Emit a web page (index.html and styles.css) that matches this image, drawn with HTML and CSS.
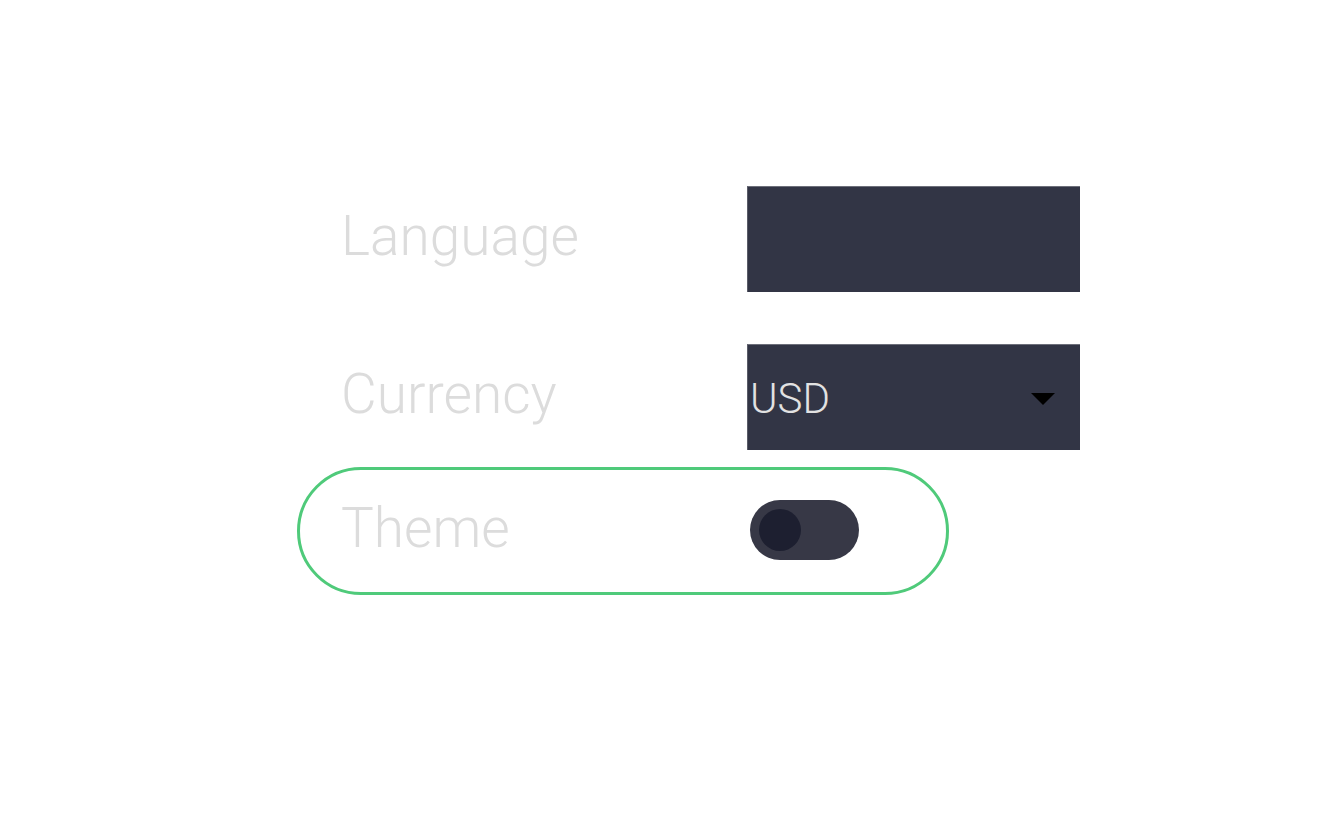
FILE: index.html
```html
<!DOCTYPE html>
<html lang="en">
<head>
<meta charset="utf-8">
<title>Settings</title>
<link rel="stylesheet" href="styles.css">
</head>
<body>
<div class="settings">
  <div class="row row-lang">
    <div class="label">Language</div>
    <div class="field"></div>
  </div>
  <div class="row row-cur">
    <div class="label">Currency</div>
    <div class="field select">
      <span class="value">USD</span>
      <span class="caret"></span>
    </div>
  </div>
  <div class="row row-theme">
    <div class="label">Theme</div>
    <div class="toggle"><span class="knob"></span></div>
  </div>
</div>
</body>
</html>
```

FILE: styles.css
```css
html, body {
  margin: 0;
  background: #ffffff;
}
body {
  font-family: Roboto, "Liberation Sans", sans-serif;
}
.settings {
  display: flex;
  flex-direction: column;
  align-items: flex-start;
  padding-top: 186px;
  padding-left: 297px;
}
.row {
  display: flex;
  align-items: center;
  padding-left: 44px;
  box-sizing: border-box;
}
.row-lang {
  height: 106px;
}
.row-cur {
  height: 106px;
  margin-top: 52px;
}
.row-theme {
  margin-top: 17px;
  width: 652px;
  height: 128px;
  border: 3px solid #4fca7a;
  border-radius: 64px;
  padding-left: 41px;
}
.label {
  width: 406px;
  font-size: 55px;
  font-weight: 300;
  color: #dcdcdc;
  line-height: 64px;
  padding-bottom: 6px;
}
.field {
  width: 333px;
  height: 106px;
  background: #323545;
  box-sizing: border-box;
  border-top: 1px solid #6d6f7a;
  border-left: 1px solid #5a5c68;
}
.select {
  display: flex;
  align-items: center;
  justify-content: space-between;
  padding: 2px 25px 0 2px;
}
.value {
  font-size: 42px;
  font-weight: 300;
  color: #e2e2e2;
  line-height: 48px;
}
.caret {
  width: 0;
  height: 0;
  border-left: 12.5px solid transparent;
  border-right: 12.5px solid transparent;
  border-top: 12px solid #000000;
}
.toggle {
  margin-left: 3px;
  width: 109px;
  height: 60px;
  border-radius: 30px;
  background: #373846;
  display: flex;
  align-items: center;
  padding-left: 9px;
  box-sizing: border-box;
  margin-bottom: 2px;
}
.knob {
  width: 42px;
  height: 42px;
  border-radius: 50%;
  background: #1d1f30;
}
```
